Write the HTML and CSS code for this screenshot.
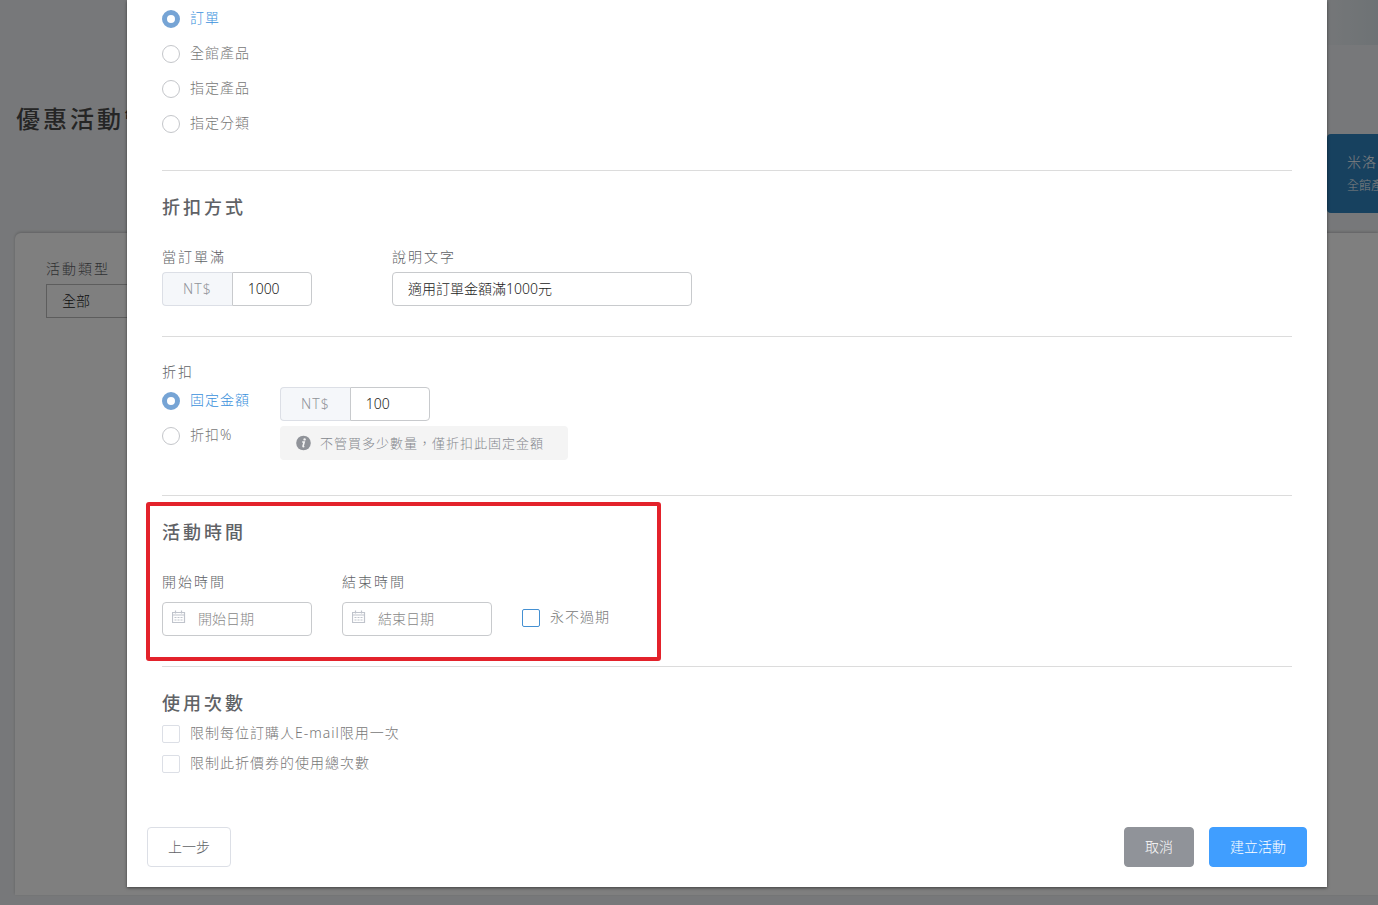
FILE: index.html
```html
<!DOCTYPE html>
<html lang="zh-Hant">
<head>
<meta charset="utf-8" />
<title>優惠活動管理</title>
<link rel="stylesheet" href="styles.css">
</head>
<body>
	<!-- 背景頁面 -->
	<div class="page">
		<div class="topbar"></div>
		<div class="page-head">
			<h1>優惠活動管理</h1>
			<div class="notice">
				<p class="notice-title">米洛</p>
				<p class="notice-text">全館產</p>
			</div>
		</div>
		<div class="panel">
			<label class="label" for="type">活動類型</label>
			<select class="type-select" id="type">
				<option>全部</option>
			</select>
		</div>
	</div>

	<!-- 彈出視窗 -->
	<div class="overlay">
		<form class="dialog">
			<div class="section targets">
				<div class="options">
					<label class="option"><input type="radio" name="target" checked><span>訂單</span></label>
					<label class="option"><input type="radio" name="target"><span>全館產品</span></label>
					<label class="option"><input type="radio" name="target"><span>指定產品</span></label>
					<label class="option"><input type="radio" name="target"><span>指定分類</span></label>
				</div>
			</div>

			<div class="section">
				<h3>折扣方式</h3>
				<div class="row wide">
					<div class="field">
						<label class="label" for="amount">當訂單滿</label>
						<div class="group">
							<span class="prefix">NT$</span>
							<input class="input" id="amount" type="text" value="1000">
						</div>
					</div>
					<div class="field long">
						<label class="label" for="desc">說明文字</label>
						<input class="input" id="desc" type="text" value="適用訂單金額滿1000元">
					</div>
				</div>
			</div>

			<div class="section discount">
				<label class="label" for="discount">折扣</label>
				<div class="row">
					<div class="options">
						<label class="option"><input type="radio" name="discount" checked><span>固定金額</span></label>
						<label class="option"><input type="radio" name="discount"><span>折扣%</span></label>
					</div>
					<div class="discount-value">
						<div class="group">
							<span class="prefix">NT$</span>
							<input class="input" id="discount" type="text" value="100">
						</div>
						<p class="tip">
							<svg width="16" height="16" viewBox="0 0 16 16">
								<circle cx="7.5" cy="8" r="7.3" fill="#909399"/>
								<circle cx="8.6" cy="4.4" r="1.2" fill="#f4f4f4"/>
								<path d="M6.2 7H8.2L7 11.2Q6.9 12.2 8.3 11.4" fill="none" stroke="#f4f4f4" stroke-width="1.6"/>
							</svg>
							<span>不管買多少數量，僅折扣此固定金額</span>
						</p>
					</div>
				</div>
			</div>

			<div class="section period">
				<h3>活動時間</h3>
				<div class="row dates">
					<div class="field">
						<label class="label" for="start">開始時間</label>
						<div class="date">
							<svg width="14" height="14" viewBox="0 0 14 14" fill="none" stroke="#c0c4cc">
								<path d="M.5 2.5H12.5V12.5H.5ZM.5 5H12.5M3.5 .5V3.5M9.5 .5V3.5" stroke-width="1.2"/>
								<path d="M2.5 7.5H10.5M2.5 10H10.5" stroke-width="1.2" stroke-dasharray="2 1"/>
							</svg>
							<input class="input" id="start" type="text" placeholder="開始日期">
						</div>
					</div>
					<div class="field">
						<label class="label" for="end">結束時間</label>
						<div class="date">
							<svg width="14" height="14" viewBox="0 0 14 14" fill="none" stroke="#c0c4cc">
								<path d="M.5 2.5H12.5V12.5H.5ZM.5 5H12.5M3.5 .5V3.5M9.5 .5V3.5" stroke-width="1.2"/>
								<path d="M2.5 7.5H10.5M2.5 10H10.5" stroke-width="1.2" stroke-dasharray="2 1"/>
							</svg>
							<input class="input" id="end" type="text" placeholder="結束日期">
						</div>
					</div>
					<label class="option never"><input type="checkbox"><span>永不過期</span></label>
				</div>
				<div class="mark"></div>
			</div>

			<div class="section limits">
				<h3>使用次數</h3>
				<div class="options">
					<label class="option"><input type="checkbox"><span>限制每位訂購人E-mail限用一次</span></label>
					<label class="option"><input type="checkbox"><span>限制此折價券的使用總次數</span></label>
				</div>
			</div>

			<div class="footer">
				<button class="btn back" type="button">上一步</button>
				<button class="btn cancel" type="button">取消</button>
				<button class="btn submit" type="submit">建立活動</button>
			</div>
		</form>
	</div>
</body>
</html>
```
FILE: styles.css
```css
*{box-sizing:border-box;}
body{
	margin:0;
	overflow:hidden;
	color:#606266;
	font-family:"Noto Sans","Noto Sans CJK TC",sans-serif;
	font-size:14px;
	font-weight:300;
	line-height:20px;
}
h1,h3,p{margin:0;}
input,select,button{
	font:inherit;
	margin:0;
}

/* 背景頁面 */
.page{
	display:flex;
	flex-direction:column;
	height:100vh;
	padding-bottom:10px;
	background:#eff1f4;
}
.topbar{
	height:45px;
	background:linear-gradient(to right,#eff1f4 95%,#dce5ea);
}
.page-head{
	display:flex;
	justify-content:space-between;
	align-items:flex-start;
	height:188px;
	padding-left:16px;
}
h1{
	margin-top:58px;
	color:#4a4a4a;
	font-size:24px;
	font-weight:500;
	line-height:32px;
	letter-spacing:3px;
}
.notice{
	width:51px;
	height:79px;
	margin-top:89px;
	padding:18px 0 0 20px;
	border-radius:4px 0 0 4px;
	background:#2e82be;
	color:#fff;
	white-space:nowrap;
}
.notice-title{letter-spacing:1px;}
.notice-text{
	margin-top:4px;
	font-size:12px;
}
.panel{
	flex:1;
	margin-left:15px;
	padding:26px 31px;
	border-radius:6px 0 0 0;
	background:#fff;
	box-shadow:0 -1px 3px rgba(0,0,0,.2);
}
.label{
	display:block;
	letter-spacing:2px;
}
.type-select{
	display:block;
	width:150px;
	height:34px;
	margin-top:5px;
	padding:0 15px;
	border:1px solid #bbb;
	background:#fff;
	color:#222;
	appearance:none;
}

/* 彈出視窗 */
.overlay{
	position:absolute;
	top:0;
	right:0;
	bottom:0;
	left:0;
	padding:0 51px 0 127px;
	background:rgba(0,0,0,.5);
}
.dialog{
	background:#fff;
	box-shadow:0 1px 3px rgba(0,0,0,.5);
}
.section{
	position:relative;
	margin:0 35px;
	padding:25px 0 30px;
	border-bottom:1px solid #dcdcdc;
}
.targets{padding:10px 0 37px;}
.discount{padding-bottom:35px;}
.limits{
	padding-bottom:54px;
	border-bottom:0;
}
h3{
	margin-bottom:29px;
	font-size:18px;
	font-weight:500;
	line-height:22px;
	letter-spacing:3px;
}
.limits h3{margin-bottom:11px;}
.row{
	display:flex;
	gap:30px;
}
.wide{gap:80px;}
.dates{align-items:flex-end;}
.field{width:150px;}
.long{width:300px;}

.input{
	display:block;
	width:100%;
	height:34px;
	padding:0 15px 2px;
	border:1px solid #c8cacd;
	border-radius:4px;
	background:#fff;
	color:#222;
}
.input::placeholder{
	color:#888;
	opacity:1;
}
.wide .label{margin-bottom:5px;}
.dates .label{margin-bottom:10px;}
.group{
	display:flex;
	width:150px;
}
.prefix{
	padding:6px 20px;
	border:1px solid #dcdfe6;
	border-right:0;
	border-radius:4px 0 0 4px;
	background:#f5f7fa;
	color:#909399;
	letter-spacing:1px;
}
.group .input{
	flex:1;
	min-width:0;
	border-radius:0 4px 4px 0;
}
.date{position:relative;}
.date svg{
	position:absolute;
	top:8px;
	left:10px;
}
.date .input{padding-left:35px;}

.options{
	display:flex;
	flex-direction:column;
	gap:17px;
}
.limits .options{gap:12px;}
.option{
	display:flex;
	gap:10px;
	height:18px;
	color:#777;
	line-height:16px;
	letter-spacing:1px;
}
.option input{
	flex:none;
	width:18px;
	height:18px;
	border:1px solid #dcdfe6;
	border-radius:2px;
	background:#fff;
	appearance:none;
}
.option input[type=radio]{
	border-color:#c4c6ca;
	border-radius:50%;
}
.option input[type=radio]:checked{
	border:5px solid #76a4d5;
}
.option input:checked + span{color:#3a90dc;}
.never{margin-bottom:9px;}
.never input{border-color:#4490d2;}

.discount .row{margin-top:5px;}
.discount .options{padding-top:5px;}
.tip{
	display:flex;
	align-items:center;
	gap:8px;
	height:34px;
	margin-top:5px;
	padding:0 24px 0 16px;
	border-radius:4px;
	background:#f4f4f4;
	color:#85888e;
	font-size:13px;
	letter-spacing:1px;
}

/* 時間區塊的紅框 */
.mark{
	position:absolute;
	top:6px;
	bottom:5px;
	left:-16px;
	width:515px;
	border:4px solid #e3222b;
	border-radius:3px;
	pointer-events:none;
}

.footer{
	display:flex;
	gap:15px;
	padding:0 20px 20px;
}
.btn{
	height:40px;
	padding:0 20px;
	border:1px solid #dcdfe6;
	border-radius:4px;
	background:#fff;
	color:#606266;
}
.back{margin-right:auto;}
.cancel{
	border-color:#909399;
	background:#909399;
	color:#fff;
}
.submit{
	border-color:#409eff;
	background:#409eff;
	color:#fff;
}
```
